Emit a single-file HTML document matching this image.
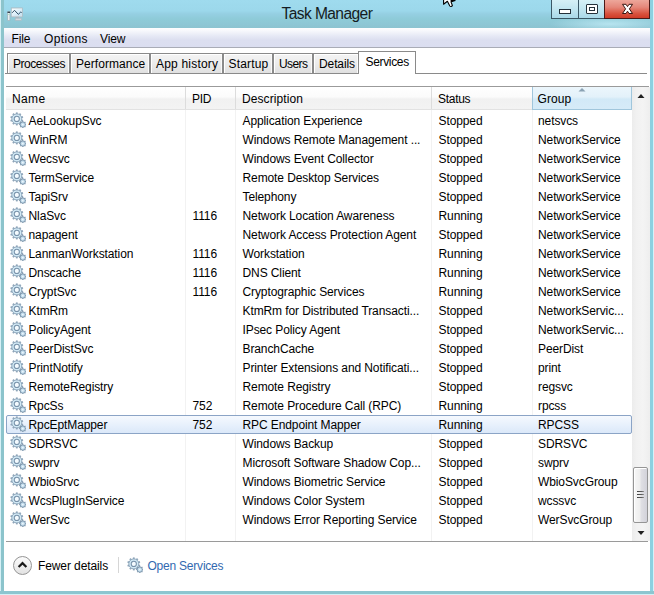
<!DOCTYPE html>
<html><head><meta charset="utf-8">
<style>
*{margin:0;padding:0;box-sizing:border-box}
html,body{width:654px;height:595px;overflow:hidden}
body{position:relative;font-family:"Liberation Sans",sans-serif;font-size:12px;color:#000;background:#8fcfe0;letter-spacing:-0.1px}
.a{position:absolute}
.t{position:absolute;white-space:nowrap;line-height:14px}
#title{position:absolute;left:0;top:0;width:654px;height:28px;background:radial-gradient(ellipse 60px 8px at 610px 24px,rgba(200,240,250,0.7),rgba(200,240,250,0)),linear-gradient(#9fdbee,#9cd8eb 38%,#95cfe2 50%,#8ecbd8 68%,#8dc6d4 88%,#8cc3d0)}
#frameL{position:absolute;left:0;top:0;width:4px;height:595px;background:linear-gradient(90deg,#d6f0f6 0,#d6f0f6 1px,#8cc4cc 1px)}
#frameR{position:absolute;left:650px;top:0;width:4px;height:595px;background:linear-gradient(90deg,#8cd0e0 0,#8cd0e0 3px,#d4f2fa 3px)}
#frameB{position:absolute;left:0;top:591px;width:654px;height:4px;background:linear-gradient(#8cc6d0 0,#8cc6d0 3px,#d4f0f6 3px)}
#content{position:absolute;left:4px;top:28px;width:646px;height:563px;background:#fff}
#menu{position:absolute;left:4px;top:28px;width:646px;height:19px;background:linear-gradient(#fdfdfe 0,#f7f8fc 14%,#e6e9f5 42%,#dcdff0 62%,#dbdef0)}
#menuline{position:absolute;left:4px;top:47px;width:646px;height:1px;background:#a9acb6}
.tab{position:absolute;top:53px;height:20px;border:1px solid #8a8a8a;border-bottom:none;box-shadow:inset 1px 1px 0 #fff,inset -1px 0 0 #fafafa;background:linear-gradient(#f4f4f4,#ececec 50%,#e0e0e0)}
.tabsel{position:absolute;top:51px;height:23px;border:1px solid #8a8a8a;border-bottom:none;background:#fff}
#tabline{position:absolute;left:5px;top:73px;width:642px;height:1px;background:#8a8a8a}
#listtop{position:absolute;left:6px;top:86px;width:643px;height:1px;background:#9a9a9a}
#hdr{position:absolute;left:6px;top:87px;width:626px;height:22px;background:linear-gradient(#ffffff,#fbfbfb 45%,#f1f1f1 55%,#f3f3f3)}
#hdrline{position:absolute;left:6px;top:109px;width:626px;height:1px;background:#e2e2e2}
.vd{position:absolute;width:1px;background:#dcdcdc}
.rd{position:absolute;width:1px;background:#f2f2f2}
#grp{position:absolute;left:532px;top:87px;width:100px;height:23px;border:1px solid #a0c6dc;border-top:none;background:linear-gradient(#ecf6fc,#e3f1fa 45%,#d2e9f7 55%,#d6ebf8)}
#sb{position:absolute;left:632px;top:87px;width:18px;height:454px;background:linear-gradient(90deg,#ececec,#f1f1f1 25%,#f4f4f4 60%,#eeeeee)}
#thumb{position:absolute;left:633px;top:467px;width:15px;height:56px;border:1px solid #959595;border-radius:2px;box-shadow:inset 1px 1px 0 #fff;background:linear-gradient(90deg,#f7f7f7,#eeeeee 45%,#dfdfe4 55%,#d2d2da)}
#listbot{position:absolute;left:6px;top:541px;width:642px;height:1px;background:#9a9a9a}
#sel{position:absolute;left:6px;top:415px;width:626px;height:19px;border:1px solid #8ba4c6;border-radius:2px;background:linear-gradient(#f5f9fe,#e8f1fc 50%,#dbe8f9)}
</style></head><body>
<svg width="0" height="0" style="position:absolute"><symbol id="gear" viewBox="0 0 16 16">
<g fill="#90a6ba"><rect x="5.9" y="0.4" width="1.8" height="2.4" transform="rotate(0 6.8 6.9)"/><rect x="5.9" y="0.4" width="1.8" height="2.4" transform="rotate(36 6.8 6.9)"/><rect x="5.9" y="0.4" width="1.8" height="2.4" transform="rotate(72 6.8 6.9)"/><rect x="5.9" y="0.4" width="1.8" height="2.4" transform="rotate(108 6.8 6.9)"/><rect x="5.9" y="0.4" width="1.8" height="2.4" transform="rotate(144 6.8 6.9)"/><rect x="5.9" y="0.4" width="1.8" height="2.4" transform="rotate(180 6.8 6.9)"/><rect x="5.9" y="0.4" width="1.8" height="2.4" transform="rotate(216 6.8 6.9)"/><rect x="5.9" y="0.4" width="1.8" height="2.4" transform="rotate(252 6.8 6.9)"/><rect x="5.9" y="0.4" width="1.8" height="2.4" transform="rotate(288 6.8 6.9)"/><rect x="5.9" y="0.4" width="1.8" height="2.4" transform="rotate(324 6.8 6.9)"/></g>
<circle cx="6.8" cy="6.9" r="5" fill="#d2eaf6" stroke="#8aa3b8" stroke-width="0.9"/>
<circle cx="6.8" cy="6.9" r="2.6" fill="#f4fbff" stroke="#7892aa" stroke-width="1.05"/>
<g fill="#8098ae"><rect x="12.25" y="8.9" width="1.1" height="1.8" transform="rotate(0 12.8 12.6)"/><rect x="12.25" y="8.9" width="1.1" height="1.8" transform="rotate(45 12.8 12.6)"/><rect x="12.25" y="8.9" width="1.1" height="1.8" transform="rotate(90 12.8 12.6)"/><rect x="12.25" y="8.9" width="1.1" height="1.8" transform="rotate(135 12.8 12.6)"/><rect x="12.25" y="8.9" width="1.1" height="1.8" transform="rotate(180 12.8 12.6)"/><rect x="12.25" y="8.9" width="1.1" height="1.8" transform="rotate(225 12.8 12.6)"/><rect x="12.25" y="8.9" width="1.1" height="1.8" transform="rotate(270 12.8 12.6)"/><rect x="12.25" y="8.9" width="1.1" height="1.8" transform="rotate(315 12.8 12.6)"/></g>
<circle cx="12.8" cy="12.6" r="2.6" fill="#c4deee" stroke="#7a94aa" stroke-width="0.9"/>
<circle cx="12.8" cy="12.6" r="0.9" fill="#eef6fc"/>
</symbol></svg>
<div id="title"></div>
<div id="content"></div>
<div id="frameL"></div><div id="frameR"></div><div id="frameB"></div>
<div id="menu"></div><div id="menuline"></div>

<div class="t" style="left:281.5px;top:5px;font-size:15.6px;line-height:18px;color:#141c22;letter-spacing:-0.6px">Task Manager</div>
<svg class="a" style="left:6px;top:6px" width="18" height="16" viewBox="0 0 18 16">
<defs><linearGradient id="scr" x1="0" y1="0" x2="1" y2="1"><stop offset="0" stop-color="#fbfeff"/><stop offset="1" stop-color="#bfe0f2"/></linearGradient></defs>
<rect x="1.7" y="5.8" width="2.2" height="8.7" fill="#e8eef2" stroke="#a0acb4" stroke-width="0.6"/>
<rect x="1.5" y="5.6" width="2.6" height="1.4" fill="#3a4650"/>
<rect x="2.2" y="8" width="1.2" height="0.8" fill="#9fd8a8"/>
<rect x="5.2" y="1.9" width="11.3" height="9" fill="#dde5ea" stroke="#a4b2ba" stroke-width="0.6"/>
<rect x="6" y="2.9" width="9.7" height="6.8" fill="url(#scr)"/>
<polyline points="6.2,6.8 8.5,4.3 12.3,8.3 14.7,6.1 15.7,6.5" fill="none" stroke="#26455e" stroke-width="0.95"/>
<rect x="9.7" y="10.9" width="3.2" height="1.3" fill="#aab6be"/>
<rect x="9.2" y="12.2" width="6.4" height="2.2" fill="#d0d8de" stroke="#a8b4bc" stroke-width="0.5"/>
</svg>
<svg class="a" style="left:440px;top:0" width="18" height="9" viewBox="0 0 18 9">
<path d="M3.6,-3 L3.6,4.3 L7.4,1.3 L9.8,6 Q10.6,6.9 11.7,6.3 L12.4,5.6 L11,1.7 L15.2,-0.6 L15.2,-3 Z" fill="#fff" stroke="#000" stroke-width="1.1" stroke-linejoin="round"/>
<path d="M10.4,0 L15.5,0 L15.5,0.9 L11.4,2.2 Z" fill="#000"/>
</svg>
<div class="a" style="left:551px;top:0;width:54px;height:19px;border:1px solid #3b5866;border-top:none;background:linear-gradient(#d6f0f6,#c2e6f0 50%,#a9d8e8)"></div>
<div class="a" style="left:578px;top:0;width:1px;height:18px;background:#3b5866"></div>
<div class="a" style="left:559px;top:9px;width:12px;height:5px;border:1px solid #25313a;background:#fff"></div>
<div class="a" style="left:586px;top:4px;width:12px;height:10px;border:1px solid #25313a;border-radius:1px;background:#fff"></div>
<div class="a" style="left:589px;top:7px;width:6px;height:4px;border:1px solid #25313a;background:#fff"></div>
<div class="a" style="left:604px;top:0;width:46px;height:19px;border:1px solid #4a1a18;border-top:none;background:linear-gradient(#eda79b,#e5877a 40%,#d9533f 75%,#cf3b27)"></div>
<svg class="a" style="left:621px;top:3px" width="13" height="12" viewBox="0 0 13 12">
<path d="M1.5,1.3 L5,1.3 L6.5,3.6 L8,1.3 L11.5,1.3 L8.4,5.9 L11.5,10.5 L8,10.5 L6.5,8.2 L5,10.5 L1.5,10.5 L4.6,5.9 Z" fill="#fff" stroke="#3a1712" stroke-width="1" stroke-linejoin="round"/>
</svg>
<div class="t" style="left:11.5px;top:32px;letter-spacing:-0.1px">File</div>
<div class="t" style="left:44px;top:32px;letter-spacing:0.35px">Options</div>
<div class="t" style="left:100px;top:32px;letter-spacing:-0.1px">View</div>
<div class="tab" style="left:7px;width:63px"></div>
<div class="tab" style="left:70px;width:80px"></div>
<div class="tab" style="left:150px;width:73px"></div>
<div class="tab" style="left:223px;width:50px"></div>
<div class="tab" style="left:273px;width:40px"></div>
<div class="tab" style="left:313px;width:46px"></div>
<div id="tabline"></div>
<div class="tabsel" style="left:358px;width:58px"></div>
<div class="t" style="left:13px;top:57px;letter-spacing:-0.45px">Processes</div>
<div class="t" style="left:76px;top:57px;letter-spacing:0.05px">Performance</div>
<div class="t" style="left:156px;top:57px;letter-spacing:0.2px">App history</div>
<div class="t" style="left:228.5px;top:57px;letter-spacing:0.17px">Startup</div>
<div class="t" style="left:279px;top:57px;letter-spacing:-0.6px">Users</div>
<div class="t" style="left:319px;top:57px;letter-spacing:-0.1px">Details</div>
<div class="t" style="left:365.5px;top:55px;letter-spacing:-0.34px">Services</div>
<div id="listtop"></div><div id="hdr"></div><div id="hdrline"></div><div id="grp"></div>
<div class="vd" style="left:185px;top:87px;height:22px"></div>
<div class="vd" style="left:235px;top:87px;height:22px"></div>
<div class="vd" style="left:431px;top:87px;height:22px"></div>
<div class="rd" style="left:185px;top:110px;height:431px"></div>
<div class="rd" style="left:235px;top:110px;height:431px"></div>
<div class="rd" style="left:431px;top:110px;height:431px"></div>
<div class="rd" style="left:532px;top:110px;height:431px"></div>
<svg class="a" style="left:577px;top:87px" width="10" height="6" viewBox="0 0 10 6"><path d="M1.5,4.5 L5,1 L8.5,4.5 Z" fill="#8aa2b4"/></svg>
<div class="t" style="left:12px;top:92px;letter-spacing:0.35px">Name</div>
<div class="t" style="left:192px;top:92px;letter-spacing:-0.35px">PID</div>
<div class="t" style="left:242px;top:92px;letter-spacing:0.09px">Description</div>
<div class="t" style="left:438px;top:92px;letter-spacing:-0.28px">Status</div>
<div class="t" style="left:537.5px;top:92px;letter-spacing:0.1px">Group</div>
<div id="sb"></div>
<svg class="a" style="left:636px;top:92px" width="10" height="8" viewBox="0 0 10 8"><path d="M1.5,6 L5,2 L8.5,6 Z" fill="#222"/></svg>
<svg class="a" style="left:636px;top:529px" width="10" height="8" viewBox="0 0 10 8"><path d="M1.5,2 L5,6 L8.5,2 Z" fill="#222"/></svg>
<div id="thumb"></div>
<div class="a" style="left:637px;top:491px;width:7px;height:1px;background:linear-gradient(90deg,#404040,#606060 70%,#9a9a9a)"></div>
<div class="a" style="left:637px;top:494px;width:7px;height:1px;background:linear-gradient(90deg,#404040,#606060 70%,#9a9a9a)"></div>
<div class="a" style="left:637px;top:497px;width:7px;height:1px;background:linear-gradient(90deg,#404040,#606060 70%,#9a9a9a)"></div>
<div id="listbot"></div>
<div id="sel"></div>
<svg class="a" style="left:10px;top:112px" width="16" height="16"><use href="#gear"/></svg>
<div class="t" style="left:28.5px;top:114px">AeLookupSvc</div>
<div class="t" style="left:242.5px;top:114px">Application Experience</div>
<div class="t" style="left:438.5px;top:114px">Stopped</div>
<div class="t" style="left:538px;top:114px">netsvcs</div>
<svg class="a" style="left:10px;top:131px" width="16" height="16"><use href="#gear"/></svg>
<div class="t" style="left:28.5px;top:133px">WinRM</div>
<div class="t" style="left:242.5px;top:133px">Windows Remote Management ...</div>
<div class="t" style="left:438.5px;top:133px">Stopped</div>
<div class="t" style="left:538px;top:133px">NetworkService</div>
<svg class="a" style="left:10px;top:150px" width="16" height="16"><use href="#gear"/></svg>
<div class="t" style="left:28.5px;top:152px">Wecsvc</div>
<div class="t" style="left:242.5px;top:152px">Windows Event Collector</div>
<div class="t" style="left:438.5px;top:152px">Stopped</div>
<div class="t" style="left:538px;top:152px">NetworkService</div>
<svg class="a" style="left:10px;top:169px" width="16" height="16"><use href="#gear"/></svg>
<div class="t" style="left:28.5px;top:171px">TermService</div>
<div class="t" style="left:242.5px;top:171px">Remote Desktop Services</div>
<div class="t" style="left:438.5px;top:171px">Stopped</div>
<div class="t" style="left:538px;top:171px">NetworkService</div>
<svg class="a" style="left:10px;top:188px" width="16" height="16"><use href="#gear"/></svg>
<div class="t" style="left:28.5px;top:190px">TapiSrv</div>
<div class="t" style="left:242.5px;top:190px">Telephony</div>
<div class="t" style="left:438.5px;top:190px">Stopped</div>
<div class="t" style="left:538px;top:190px">NetworkService</div>
<svg class="a" style="left:10px;top:207px" width="16" height="16"><use href="#gear"/></svg>
<div class="t" style="left:28.5px;top:209px">NlaSvc</div>
<div class="t" style="left:192.5px;top:209px">1116</div>
<div class="t" style="left:242.5px;top:209px">Network Location Awareness</div>
<div class="t" style="left:438.5px;top:209px">Running</div>
<div class="t" style="left:538px;top:209px">NetworkService</div>
<svg class="a" style="left:10px;top:226px" width="16" height="16"><use href="#gear"/></svg>
<div class="t" style="left:28.5px;top:228px">napagent</div>
<div class="t" style="left:242.5px;top:228px">Network Access Protection Agent</div>
<div class="t" style="left:438.5px;top:228px">Stopped</div>
<div class="t" style="left:538px;top:228px">NetworkService</div>
<svg class="a" style="left:10px;top:245px" width="16" height="16"><use href="#gear"/></svg>
<div class="t" style="left:28.5px;top:247px">LanmanWorkstation</div>
<div class="t" style="left:192.5px;top:247px">1116</div>
<div class="t" style="left:242.5px;top:247px">Workstation</div>
<div class="t" style="left:438.5px;top:247px">Running</div>
<div class="t" style="left:538px;top:247px">NetworkService</div>
<svg class="a" style="left:10px;top:264px" width="16" height="16"><use href="#gear"/></svg>
<div class="t" style="left:28.5px;top:266px">Dnscache</div>
<div class="t" style="left:192.5px;top:266px">1116</div>
<div class="t" style="left:242.5px;top:266px">DNS Client</div>
<div class="t" style="left:438.5px;top:266px">Running</div>
<div class="t" style="left:538px;top:266px">NetworkService</div>
<svg class="a" style="left:10px;top:283px" width="16" height="16"><use href="#gear"/></svg>
<div class="t" style="left:28.5px;top:285px">CryptSvc</div>
<div class="t" style="left:192.5px;top:285px">1116</div>
<div class="t" style="left:242.5px;top:285px">Cryptographic Services</div>
<div class="t" style="left:438.5px;top:285px">Running</div>
<div class="t" style="left:538px;top:285px">NetworkService</div>
<svg class="a" style="left:10px;top:302px" width="16" height="16"><use href="#gear"/></svg>
<div class="t" style="left:28.5px;top:304px">KtmRm</div>
<div class="t" style="left:242.5px;top:304px">KtmRm for Distributed Transacti...</div>
<div class="t" style="left:438.5px;top:304px">Stopped</div>
<div class="t" style="left:538px;top:304px">NetworkServic...</div>
<svg class="a" style="left:10px;top:321px" width="16" height="16"><use href="#gear"/></svg>
<div class="t" style="left:28.5px;top:323px">PolicyAgent</div>
<div class="t" style="left:242.5px;top:323px">IPsec Policy Agent</div>
<div class="t" style="left:438.5px;top:323px">Stopped</div>
<div class="t" style="left:538px;top:323px">NetworkServic...</div>
<svg class="a" style="left:10px;top:340px" width="16" height="16"><use href="#gear"/></svg>
<div class="t" style="left:28.5px;top:342px">PeerDistSvc</div>
<div class="t" style="left:242.5px;top:342px">BranchCache</div>
<div class="t" style="left:438.5px;top:342px">Stopped</div>
<div class="t" style="left:538px;top:342px">PeerDist</div>
<svg class="a" style="left:10px;top:359px" width="16" height="16"><use href="#gear"/></svg>
<div class="t" style="left:28.5px;top:361px">PrintNotify</div>
<div class="t" style="left:242.5px;top:361px">Printer Extensions and Notificati...</div>
<div class="t" style="left:438.5px;top:361px">Stopped</div>
<div class="t" style="left:538px;top:361px">print</div>
<svg class="a" style="left:10px;top:378px" width="16" height="16"><use href="#gear"/></svg>
<div class="t" style="left:28.5px;top:380px">RemoteRegistry</div>
<div class="t" style="left:242.5px;top:380px">Remote Registry</div>
<div class="t" style="left:438.5px;top:380px">Stopped</div>
<div class="t" style="left:538px;top:380px">regsvc</div>
<svg class="a" style="left:10px;top:397px" width="16" height="16"><use href="#gear"/></svg>
<div class="t" style="left:28.5px;top:399px">RpcSs</div>
<div class="t" style="left:192.5px;top:399px">752</div>
<div class="t" style="left:242.5px;top:399px">Remote Procedure Call (RPC)</div>
<div class="t" style="left:438.5px;top:399px">Running</div>
<div class="t" style="left:538px;top:399px">rpcss</div>
<svg class="a" style="left:10px;top:416px" width="16" height="16"><use href="#gear"/></svg>
<div class="t" style="left:28.5px;top:418px">RpcEptMapper</div>
<div class="t" style="left:192.5px;top:418px">752</div>
<div class="t" style="left:242.5px;top:418px">RPC Endpoint Mapper</div>
<div class="t" style="left:438.5px;top:418px">Running</div>
<div class="t" style="left:538px;top:418px">RPCSS</div>
<svg class="a" style="left:10px;top:435px" width="16" height="16"><use href="#gear"/></svg>
<div class="t" style="left:28.5px;top:437px">SDRSVC</div>
<div class="t" style="left:242.5px;top:437px">Windows Backup</div>
<div class="t" style="left:438.5px;top:437px">Stopped</div>
<div class="t" style="left:538px;top:437px">SDRSVC</div>
<svg class="a" style="left:10px;top:454px" width="16" height="16"><use href="#gear"/></svg>
<div class="t" style="left:28.5px;top:456px">swprv</div>
<div class="t" style="left:242.5px;top:456px">Microsoft Software Shadow Cop...</div>
<div class="t" style="left:438.5px;top:456px">Stopped</div>
<div class="t" style="left:538px;top:456px">swprv</div>
<svg class="a" style="left:10px;top:473px" width="16" height="16"><use href="#gear"/></svg>
<div class="t" style="left:28.5px;top:475px">WbioSrvc</div>
<div class="t" style="left:242.5px;top:475px">Windows Biometric Service</div>
<div class="t" style="left:438.5px;top:475px">Stopped</div>
<div class="t" style="left:538px;top:475px">WbioSvcGroup</div>
<svg class="a" style="left:10px;top:492px" width="16" height="16"><use href="#gear"/></svg>
<div class="t" style="left:28.5px;top:494px">WcsPlugInService</div>
<div class="t" style="left:242.5px;top:494px">Windows Color System</div>
<div class="t" style="left:438.5px;top:494px">Stopped</div>
<div class="t" style="left:538px;top:494px">wcssvc</div>
<svg class="a" style="left:10px;top:511px" width="16" height="16"><use href="#gear"/></svg>
<div class="t" style="left:28.5px;top:513px">WerSvc</div>
<div class="t" style="left:242.5px;top:513px">Windows Error Reporting Service</div>
<div class="t" style="left:438.5px;top:513px">Stopped</div>
<div class="t" style="left:538px;top:513px">WerSvcGroup</div>
<div class="a" style="left:13px;top:556px;width:19px;height:19px;border-radius:50%;border:1px solid #959595;background:linear-gradient(#fbfbfb,#f0f0f0 50%,#e2e2e2)"></div>
<svg class="a" style="left:17px;top:560px" width="11" height="9" viewBox="0 0 11 9"><path d="M1.6,7 L5.5,3.1 L9.4,7" fill="none" stroke="#1a1a1a" stroke-width="2.2"/></svg>
<div class="t" style="left:38px;top:559px">Fewer details</div>
<div class="a" style="left:118px;top:557px;width:1px;height:16px;background:#d6d6d6"></div>
<svg class="a" style="left:127px;top:557px" width="16" height="16"><use href="#gear"/></svg>
<div class="t" style="left:147.5px;top:559px;color:#3269b0;letter-spacing:-0.22px">Open Services</div>

</body></html>
